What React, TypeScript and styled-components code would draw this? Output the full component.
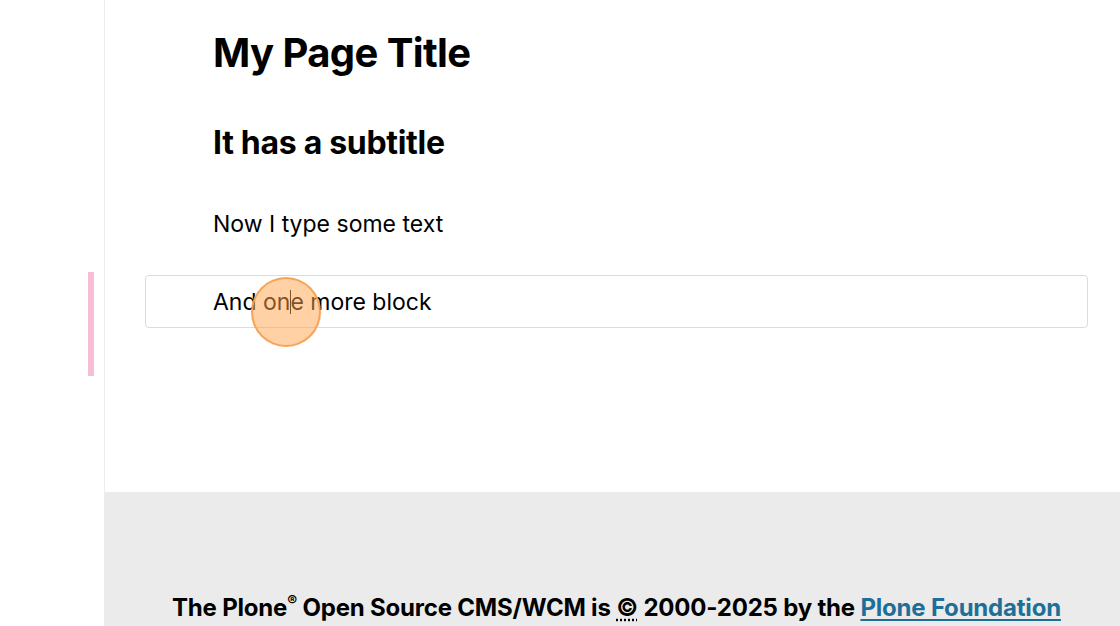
import React from "react";
import styled, { createGlobalStyle } from "styled-components";

const Global = createGlobalStyle`
  html, body { margin: 0; padding: 0; background: #ffffff; }
  body { font-family: Inter, "Noto Sans", sans-serif; color: #000; overflow: hidden; }
  #root { height: 626px; }
`;

const Page = styled.div`
  display: flex;
  height: 626px;
  width: 1120px;
  position: relative;
  overflow: hidden;
`;

const Sidebar = styled.aside`
  width: 104px;
  flex: none;
  border-right: 1px solid #ececec;
  background: #ffffff;
  position: relative;
`;

const DragBar = styled.div`
  position: absolute;
  left: 88px;
  top: 272px;
  width: 6px;
  height: 104px;
  background: #f7bcd6;
`;

const Main = styled.main`
  flex: 1;
  display: flex;
  flex-direction: column;
`;

const Content = styled.section`
  height: 492px;
  flex: none;
  padding: 0 32px 0 40px;
  box-sizing: border-box;
  display: flex;
  flex-direction: column;
`;

const Block = styled.div<{ $selected?: boolean; $gap?: number }>`
  padding: 0 0 0 67px;
  margin-top: ${(p) => p.$gap ?? 0}px;
  border: 1px solid ${(p) => (p.$selected ? "#c9e1ea" : "transparent")};
  border-radius: 4px;
  position: relative;
  ${(p) => (p.$selected ? "padding-top: 10px; padding-bottom: 9px;" : "")}
`;

const Title = styled.h1`
  margin: 0;
  font-size: 40px;
  line-height: 48px;
  font-weight: 700;
  letter-spacing: -0.6px;
`;

const Subtitle = styled.h2`
  margin: 0;
  font-size: 32px;
  line-height: 38px;
  font-weight: 700;
  letter-spacing: -0.3px;
`;

const Para = styled.p`
  margin: 0;
  font-size: 23px;
  line-height: 32px;
  font-weight: 400;
`;

const Caret = styled.span`
  display: inline-block;
  width: 1px;
  height: 24px;
  background: #000;
  vertical-align: -4px;
  margin: 0 -1px 0 0;
`;

const Pointer = styled.div`
  position: absolute;
  left: 105px;
  top: 1px;
  width: 70px;
  height: 70px;
  border-radius: 50%;
  background: rgba(255, 163, 76, 0.5);
  border: 2.5px solid rgba(245, 160, 80, 0.9);
  box-sizing: border-box;
  pointer-events: none;
`;

const Footer = styled.footer`
  flex: 1;
  background: #ebebeb;
  display: flex;
  justify-content: center;
  padding: 101px 0 0 8px;
  box-sizing: border-box;
`;

const FooterText = styled.p`
  margin: 0;
  font-size: 24px;
  line-height: 30px;
  font-weight: 700;
  letter-spacing: -0.2px;
  white-space: nowrap;
`;

const Sup = styled.sup`
  font-size: 15px;
  line-height: 0;
  vertical-align: 10px;
`;

const Abbr = styled.abbr`
  text-decoration: underline dotted;
  text-underline-offset: 3px;
`;

const FooterLink = styled.a`
  color: #1d6f9a;
  text-decoration: underline;
  text-underline-offset: 3px;
`;

export default function App() {
  return (
    <>
      <Global />
      <Page>
        <Sidebar>
          <DragBar />
        </Sidebar>
        <Main>
          <Content>
            <Block $gap={28}>
              <Title>My Page Title</Title>
            </Block>
            <Block $gap={45}>
              <Subtitle>It has a subtitle</Subtitle>
            </Block>
            <Block $gap={44}>
              <Para>Now I type some text</Para>
            </Block>
            <Block $selected $gap={34}>
              <Para>
                And on<Caret />e more block
              </Para>
              <Pointer />
            </Block>
          </Content>
          <Footer>
            <FooterText>
              The Plone<Sup>®</Sup> Open Source CMS/WCM is <Abbr title="Copyright">©</Abbr> 2000-2025 by the{" "}
              <FooterLink href="#">Plone Foundation</FooterLink>
            </FooterText>
          </Footer>
        </Main>
      </Page>
    </>
  );
}
